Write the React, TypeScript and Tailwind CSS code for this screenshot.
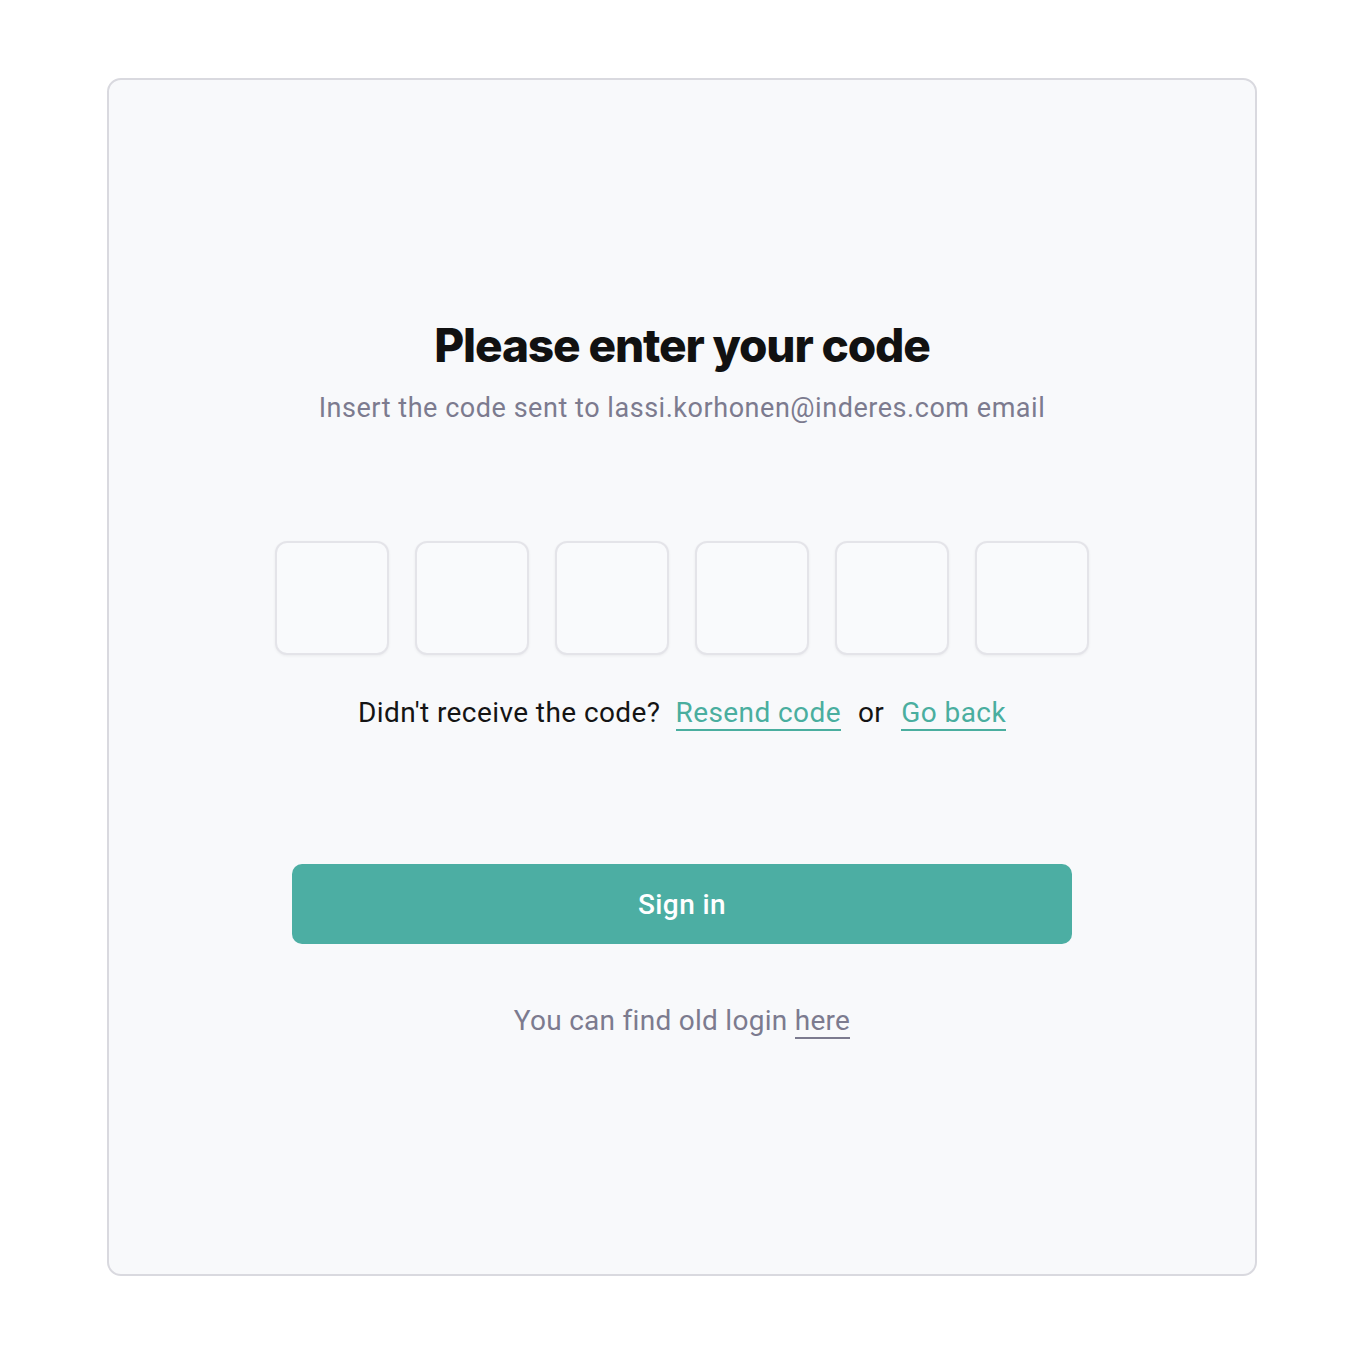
import React from 'react';

const CodeBox: React.FC = () => (
  <input
    type="text"
    maxLength={1}
    className="w-[114px] h-[114px] rounded-[12px] border-2 border-[#e4e4e9] bg-[#f9fafc] shadow-[0_1px_3px_rgba(0,0,0,0.06)] text-center text-[40px] outline-none"
  />
);

export default function App() {
  return (
    <div className="min-h-[1348px] bg-white pt-[78px] pl-[107px] pr-[105px] pb-[72px] font-['Roboto',sans-serif]">
      <div className="h-[1198px] rounded-[14px] border-2 border-[#d9d9df] bg-[#f8f9fb] flex flex-col items-center pt-[238px]">
        {/* Heading */}
        <h1 className="font-['Inter',sans-serif] font-extrabold text-[46px] leading-[54px] tracking-[-0.025em] text-[#111111]">
          Please enter your code
        </h1>
        <p className="mt-[20px] text-[27px] leading-[32px] tracking-[0.02em] text-[#7c7b8f]">
          Insert the code sent to lassi.korhonen@inderes.com email
        </p>

        {/* Code inputs */}
        <div className="mt-[117px] flex gap-[26px]">
          {[0, 1, 2, 3, 4, 5].map((i) => (
            <CodeBox key={i} />
          ))}
        </div>

        {/* Resend */}
        <div className="mt-[42px] flex items-start text-[28px] leading-[32px] tracking-[0.015em] text-[#141414]">
          <span>Didn't receive the code?</span>
          <a href="#" className="ml-[15px] border-b-2 border-[#4aae9f] text-[#4aae9f]">
            Resend code
          </a>
          <span className="mx-[17px]">or</span>
          <a href="#" className="border-b-2 border-[#4aae9f] text-[#4aae9f]">
            Go back
          </a>
        </div>

        {/* Sign in */}
        <button className="mt-[133px] w-[780px] h-[80px] rounded-[10px] bg-[#4caea3] text-white text-[28px] font-medium tracking-[0.015em] pt-[2px]">
          Sign in
        </button>

        {/* Old login */}
        <p className="mt-[61px] text-[28px] leading-[32px] tracking-[0.01em] text-[#7c7b8f]">
          You can find old login{' '}
          <a href="#" className="border-b-2 border-[#7c7b8f]">
            here
          </a>
        </p>
      </div>
    </div>
  );
}
